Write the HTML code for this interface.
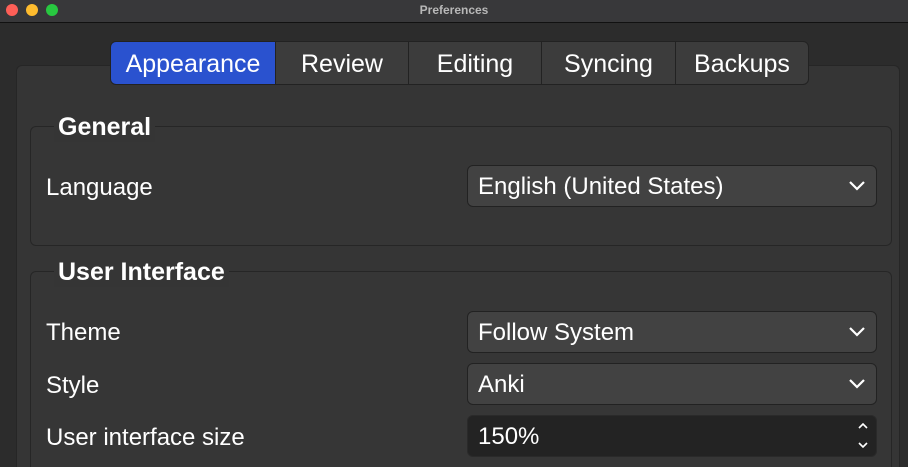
<!DOCTYPE html><html style="width:908px;height:467px;overflow:hidden"><head><style>
*{box-sizing:border-box;margin:0;padding:0}
body{width:908px;height:467px;overflow:hidden;background:#2c2c2c;font-family:"Liberation Sans",sans-serif;color:#fff;position:relative}
.tb{position:absolute;left:0;top:0;width:908px;height:23px;background:#38383a;border-bottom:1px solid #111;text-align:center;font-size:12px;font-weight:bold;color:#b8b8b8;line-height:20px}
.dot{position:absolute;top:4px;width:12px;height:12px;border-radius:50%}
.panel{position:absolute;left:16px;top:65px;width:884px;height:402px;background:#353535;border:1px solid #262626;border-bottom:none;border-radius:6px 6px 0 0}
.tab{position:absolute;top:41px;height:44px;background:#3c3c3c;border:1px solid #222;font-size:25px;text-align:center;line-height:44px}
.grp{position:absolute;border:1px solid #262626;border-radius:6px;background:#363636}
.gt{position:absolute;font-size:25px;font-weight:bold;background:#353535;padding:0 4px}
.lbl{position:absolute;left:46px;font-size:24px}
.cb{position:absolute;left:467px;width:410px;height:42px;background:#424242;border:1px solid #222;border-radius:6px;font-size:24px;padding-left:10px;line-height:42px}
.cb svg{position:absolute;right:10px;top:14px}
</style></head><body>
<div class="tb">Preferences
<div class="dot" style="left:6px;background:#fe5f57"></div><div class="dot" style="left:26px;background:#febc2e"></div><div class="dot" style="left:46px;background:#28c840"></div></div>
<div class="panel"></div>
<div class="tab" style="left:110px;width:166px;background:#2a52cf;border-radius:6px 0 0 6px">Appearance</div>
<div class="tab" style="left:275px;width:134px">Review</div>
<div class="tab" style="left:408px;width:134px">Editing</div>
<div class="tab" style="left:541px;width:135px">Syncing</div>
<div class="tab" style="left:675px;width:134px;border-radius:0 6px 6px 0">Backups</div>
<div class="grp" style="left:30px;top:126px;width:862px;height:120px"></div>
<div class="gt" style="left:54px;top:113px">General</div>
<div class="lbl" style="top:174px">Language</div>
<div class="cb" style="top:165px">English (United States)<svg width="18" height="12"><path d="M2 2l7 7 7-7" stroke="#fff" stroke-width="2.2" fill="none"/></svg></div>
<div class="grp" style="left:30px;top:271px;width:862px;height:196px;border-bottom:none;border-radius:6px 6px 0 0"></div>
<div class="gt" style="left:54px;top:258px">User Interface</div>
<div class="lbl" style="top:319px">Theme</div>
<div class="cb" style="top:311px">Follow System<svg width="18" height="12"><path d="M2 2l7 7 7-7" stroke="#fff" stroke-width="2.2" fill="none"/></svg></div>
<div class="lbl" style="top:372px">Style</div>
<div class="cb" style="top:363px">Anki<svg width="18" height="12"><path d="M2 2l7 7 7-7" stroke="#fff" stroke-width="2.2" fill="none"/></svg></div>
<div class="lbl" style="top:424px">User interface size</div>
<div class="cb" style="top:415px;background:#232323;border-color:#2a2a2a">150%<svg width="14" height="30" style="top:5px;right:6px"><path d="M3 7l4-4 4 4M3 22l4 4 4-4" stroke="#fff" stroke-width="1.6" fill="none"/></svg></div>
</body></html>
